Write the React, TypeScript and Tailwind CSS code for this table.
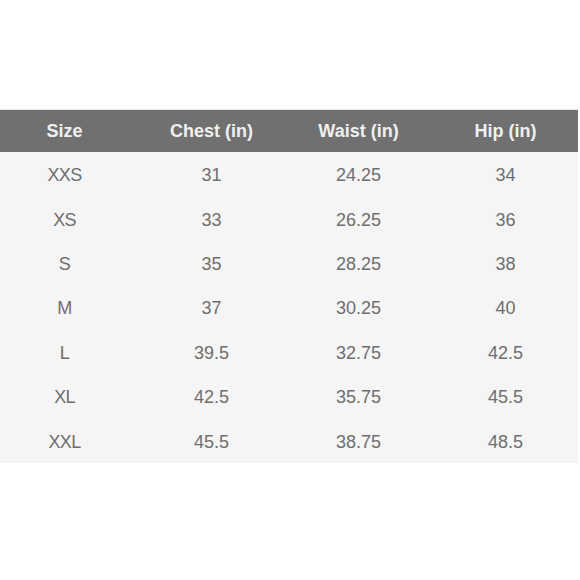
import React from "react";

const rows: [string, string, string, string][] = [
  ["XXS", "31", "24.25", "34"],
  ["XS", "33", "26.25", "36"],
  ["S", "35", "28.25", "38"],
  ["M", "37", "30.25", "40"],
  ["L", "39.5", "32.75", "42.5"],
  ["XL", "42.5", "35.75", "45.5"],
  ["XXL", "45.5", "38.75", "48.5"],
];

export default function App() {
  return (
    <div
      className="w-[580px] h-[580px] bg-white flex flex-col"
      style={{ fontFamily: '"Liberation Sans", Arial, sans-serif' }}
    >
      <div className="h-[109px]" />
      <div className="w-[578px] overflow-hidden">
        <div className="bg-[#707070] h-[43px] border-t border-[#e4e4e4]">
          <div className="-ml-[9px] grid grid-cols-[repeat(4,147px)] h-full items-center text-[18px] font-bold text-[#f0f0f0]">
            <div className="text-center">Size</div>
            <div className="text-center">Chest (in)</div>
            <div className="text-center">Waist (in)</div>
            <div className="text-center">Hip (in)</div>
          </div>
        </div>
        <div className="bg-[#f5f5f5] h-[311px] flex flex-col">
          {rows.map((r) => (
            <div
              key={r[0]}
              className="flex-1 -ml-[9px] pt-[3px] grid grid-cols-[repeat(4,147px)] items-center text-[18px] text-[#6e6e6e]"
            >
              <div className="text-center tracking-[-0.04em]">{r[0]}</div>
              <div className="text-center">{r[1]}</div>
              <div className="text-center">{r[2]}</div>
              <div className="text-center">{r[3]}</div>
            </div>
          ))}
        </div>
      </div>
    </div>
  );
}
